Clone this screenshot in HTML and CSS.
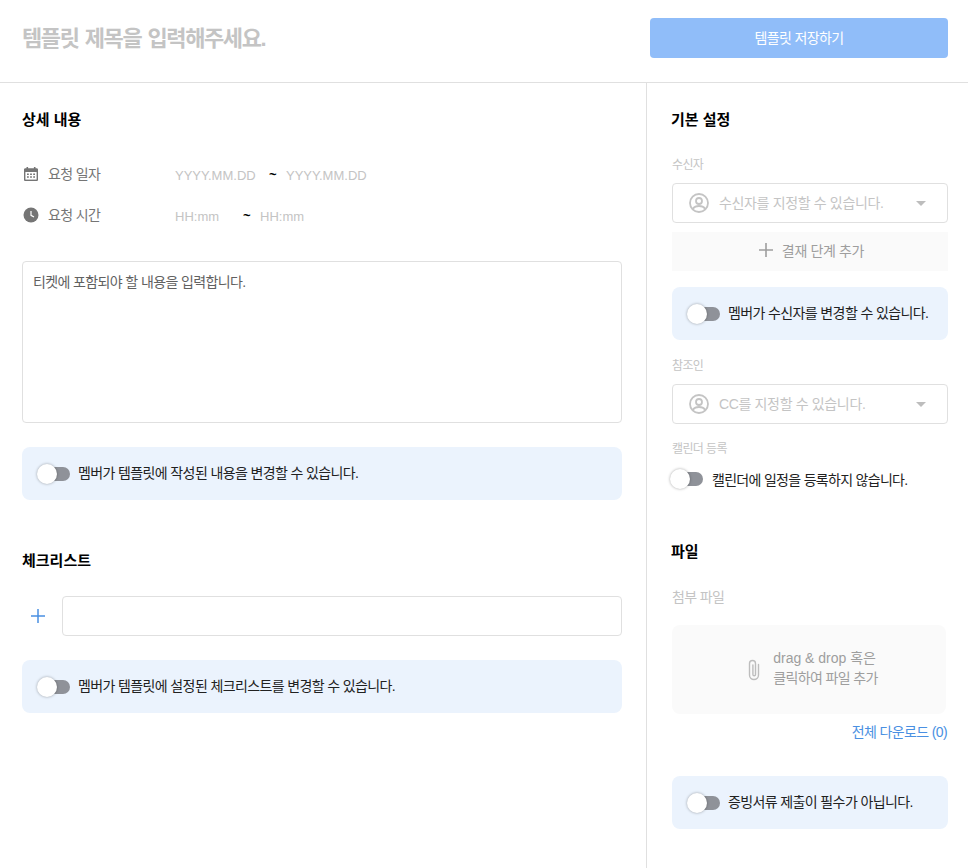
FILE: index.html
```html
<!DOCTYPE html>
<html lang="ko">
<head>
<meta charset="utf-8">
<title>템플릿</title>
<link rel="stylesheet" href="styles.css">
</head>
<body>
<header class="top">
  <div class="title">템플릿 제목을 입력해주세요.</div>
  <button class="save">템플릿 저장하기</button>
</header>
<main class="layout">
  <section class="left">
    <h2 class="heading">상세 내용</h2>
    <div class="meta meta-date">
      <div class="meta-label">
        <svg class="meta-icon" viewBox="0 0 16 16"><path fill="#757575" d="M3.5 1h1.6v1.3h5.800V1h1.600v1.300h1.200c.7 0 1.300.6 1.300 1.300v10.100c0 .7-.6 1.300-1.300 1.300H2.300c-.7 0-1.300-.6-1.300-1.300V3.600c0-.7.6-1.300 1.300-1.300h1.200z"/><path fill="#fff" d="M2.400 6h11.200v7.600H2.400z"/><path fill="#757575" d="M4 7.400h1.800v1.500H4zM7.100 7.400h1.800v1.500H7.100zM10.200 7.400H12v1.500h-1.800zM4 10.300h1.800v1.500H4zM7.100 10.300h1.800v1.500H7.100zM10.200 10.300H12v1.500h-1.800z"/></svg>
        <span class="meta-text">요청 일자</span>
      </div>
      <span class="ph ph-date">YYYY.MM.DD</span><span class="tilde">~</span><span class="ph">YYYY.MM.DD</span>
    </div>
    <div class="meta meta-time">
      <div class="meta-label">
        <svg class="meta-icon" viewBox="0 0 16 16"><circle cx="8" cy="8" r="7.500" fill="#757575"/><path d="M8 4v4.300l3 1.700" fill="none" stroke="#fff" stroke-width="1.200"/></svg>
        <span class="meta-text">요청 시간</span>
      </div>
      <span class="ph ph-hour">HH:mm</span><span class="tilde">~</span><span class="ph">HH:mm</span>
    </div>
    <div class="textbox">티켓에 포함되야 할 내용을 입력합니다.</div>
    <div class="notice">
      <span class="toggle"></span>
      <span class="notice-text">멤버가 템플릿에 작성된 내용을 변경할 수 있습니다.</span>
    </div>
    <h2 class="heading heading-check">체크리스트</h2>
    <div class="check-row">
      <svg class="check-plus" viewBox="0 0 14 14"><path d="M7 0v14M0 7h14" stroke="#4a90e2" stroke-width="1.500" fill="none"/></svg>
      <div class="check-input"></div>
    </div>
    <div class="notice">
      <span class="toggle"></span>
      <span class="notice-text">멤버가 템플릿에 설정된 체크리스트를 변경할 수 있습니다.</span>
    </div>
  </section>
  <aside class="right">
    <h2 class="heading heading-side">기본 설정</h2>
    <div class="label label-first">수신자</div>
    <div class="select">
      <svg class="person" viewBox="0 0 20 20"><g fill="none" stroke="#c4c4c4" stroke-width="1.800"><circle cx="10" cy="10" r="9"/><circle cx="10" cy="8" r="3"/><path d="M3.800 15.800c1.500-2 3.800-2.800 6.200-2.800s4.700.8 6.200 2.800"/></g></svg>
      <span class="select-text">수신자를 지정할 수 있습니다.</span>
      <span class="caret"></span>
    </div>
    <div class="add-step">
      <svg class="add-plus" viewBox="0 0 14 14"><path d="M7 0v14M0 7h14" stroke="#9e9e9e" stroke-width="1.600" fill="none"/></svg>
      <span>결재 단계 추가</span>
    </div>
    <div class="notice notice-side">
      <span class="toggle"></span>
      <span class="notice-text">멤버가 수신자를 변경할 수 있습니다.</span>
    </div>
    <div class="label label-cc">참조인</div>
    <div class="select">
      <svg class="person" viewBox="0 0 20 20"><g fill="none" stroke="#c4c4c4" stroke-width="1.800"><circle cx="10" cy="10" r="9"/><circle cx="10" cy="8" r="3"/><path d="M3.800 15.800c1.500-2 3.800-2.800 6.200-2.800s4.700.8 6.200 2.800"/></g></svg>
      <span class="select-text">CC를 지정할 수 있습니다.</span>
      <span class="caret"></span>
    </div>
    <div class="label label-cal">캘린더 등록</div>
    <div class="cal-row">
      <span class="toggle"></span>
      <span class="cal-text">캘린더에 일정을 등록하지 않습니다.</span>
    </div>
    <h2 class="heading heading-side heading-file">파일</h2>
    <div class="label label-file">첨부 파일</div>
    <div class="drop">
      <svg class="clip" viewBox="0 0 14 24"><path d="M11.500 6.500V17a4.500 4.500 0 0 1-9 0V5.500a3 3 0 0 1 6 0V16.500a1.300 1.300 0 0 1-2.600 0V7" fill="none" stroke="#bdbdbd" stroke-width="1.400" stroke-linecap="round"/></svg>
      <div class="drop-text">
        <div class="drop-latin">drag &amp; drop 혹은</div>
        <div>클릭하여 파일 추가</div>
      </div>
    </div>
    <div class="download">전체 다운로드 (0)</div>
    <div class="notice notice-side notice-proof">
      <span class="toggle"></span>
      <span class="notice-text">증빙서류 제출이 필수가 아닙니다.</span>
    </div>
  </aside>
</main>
</body>
</html>
```
FILE: styles.css
```css
* { box-sizing: border-box; }
html, body { margin: 0; height: 100%; }
body {
  width: 968px;
  height: 868px;
  overflow: hidden;
  background: #fff;
  color: #212121;
  font-family: "Liberation Sans", "Noto Sans CJK KR", sans-serif;
  font-size: 14px;
  letter-spacing: -0.62px;
}
.top {
  height: 83px;
  border-bottom: 1px solid #e0e0e0;
  padding: 18px 20px 0 22px;
  display: flex;
  justify-content: space-between;
  align-items: flex-start;
}
.title {
  font-size: 22px;
  font-weight: 700;
  letter-spacing: -1.4px;
  word-spacing: 1.5px;
  color: #c4c4c4;
  line-height: 40px;
  padding-top: 1px;
}
.save {
  width: 298px;
  height: 40px;
  border: 0;
  border-radius: 4px;
  background: #90bdf9;
  color: #fff;
  font: inherit;
  letter-spacing: inherit;
  padding: 0 0 2px;
}
.layout { display: flex; height: 785px; }
.left {
  width: 647px;
  border-right: 1px solid #e0e0e0;
  padding: 26px 24px 0 22px;
}
.right { flex: 1; padding: 26px 20px 0 25px; }
.heading {
  margin: 0;
  font-size: 15px;
  line-height: 22px;
  font-weight: 700;
  color: #000;
  letter-spacing: 0;
}
.heading-side { margin-left: -1px; }
.meta { display: flex; align-items: center; height: 22px; }
.meta-date { margin-top: 32px; }
.meta-time { margin-top: 19px; }
.meta-label { width: 153px; display: flex; align-items: center; gap: 9px; color: #757575; }
.meta-text { padding-bottom: 2px; }
.meta-icon { width: 16px; height: 16px; margin-left: 1px; }
.ph { color: #c4c4c4; font-size: 13px; letter-spacing: 0; padding-top: 2px; }
.ph-date { width: 94px; }
.ph-hour { width: 68px; }
.tilde { width: 17px; color: #000; font-size: 13px; font-weight: 700; letter-spacing: 0; padding-top: 1px; }
.textbox {
  margin-top: 35px;
  height: 162px;
  border: 1px solid #e0e0e0;
  border-radius: 4px;
  padding: 10px;
  color: #616161;
  line-height: 20px;
}
.notice {
  margin-top: 24px;
  height: 53px;
  border-radius: 8px;
  background: #ebf3fd;
  padding-left: 17px;
  display: flex;
  align-items: center;
  gap: 8px;
  color: #212121;
}
.notice-text { padding-bottom: 3px; }
.toggle {
  position: relative;
  display: block;
  flex: none;
  width: 31px;
  height: 14px;
  border-radius: 7px;
  background: #8f9299;
}
.toggle::before {
  content: "";
  position: absolute;
  left: -2px;
  top: -3px;
  width: 20px;
  height: 20px;
  border-radius: 50%;
  background: #fff;
  box-shadow: 0 0 3px rgba(0, 0, 0, .35);
}
.heading-check { margin-top: 50px; }
.check-row { display: flex; align-items: center; margin-top: 24px; }
.check-plus { width: 14px; height: 14px; margin: 0 17px 0 9px; }
.check-input {
  flex: 1;
  height: 40px;
  border: 1px solid #e0e0e0;
  border-radius: 4px;
}
.label { color: #c4c4c4; font-size: 12px; line-height: 18px; }
.label-first { margin-top: 25px; }
.label-cc { margin-top: 17px; }
.label-cal { margin-top: 16px; }
.label-file { margin-top: 24px; font-size: 14px; line-height: 20px; }
.select {
  margin-top: 9px;
  height: 40px;
  border: 1px solid #e0e0e0;
  border-radius: 4px;
  display: flex;
  align-items: center;
  padding: 0 21px 0 16px;
  color: #c4c4c4;
  letter-spacing: -0.35px;
}
.person { width: 20px; height: 20px; }
.select-text { flex: 1; margin-left: 10px; padding-bottom: 2px; }
.caret {
  width: 0;
  height: 0;
  border-left: 5px solid transparent;
  border-right: 5px solid transparent;
  border-top: 5px solid #bdbdbd;
}
.add-step {
  margin-top: 9px;
  height: 39px;
  background: #fafafa;
  display: flex;
  align-items: center;
  justify-content: center;
  gap: 9px;
  padding: 0 0 3px 3px;
  color: #9e9e9e;
  letter-spacing: -0.35px;
}
.add-plus { width: 14px; height: 14px; }
.notice-side { margin-top: 16px; }
.cal-row { display: flex; align-items: center; gap: 9px; margin-top: 9px; height: 24px; }
.cal-text { letter-spacing: -0.7px; }
.heading-file { margin-top: 50px; }
.drop {
  margin-top: 18px;
  width: 274px;
  height: 89px;
  border-radius: 8px;
  background: #fafafa;
  display: flex;
  align-items: center;
  justify-content: center;
  gap: 12px;
  padding-left: 7px;
  color: #9e9e9e;
  line-height: 20px;
}
.drop-text { padding-bottom: 4px; }
.drop-latin { letter-spacing: 0; }
.clip { width: 14px; height: 24px; }
.download {
  margin-top: 9px;
  text-align: right;
  color: #4a90e2;
  line-height: 18px;
  padding-right: 1px;
}
.notice-proof { margin-top: 35px; }
```
